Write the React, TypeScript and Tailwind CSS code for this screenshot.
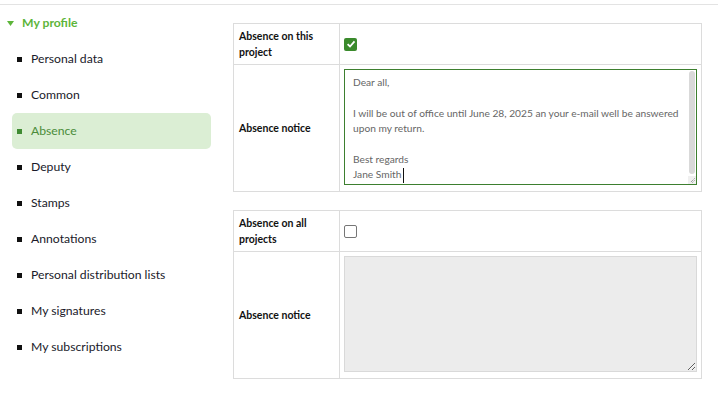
import { ReactNode } from 'react';

const menu = [
  'Personal data',
  'Common',
  'Absence',
  'Deputy',
  'Stamps',
  'Annotations',
  'Personal distribution lists',
  'My signatures',
  'My subscriptions',
];

const notice = `Dear all,

I will be out of office until June 28, 2025 an your e-mail well be answered upon my return.

Best regards
Jane Smith`;

function Checkbox({ checked }: { checked: boolean }) {
  if (!checked) {
    return <span className="block h-[13px] w-[13px] rounded-[2px] border border-[#767676] bg-white" />;
  }
  return (
    <span className="flex h-[13px] w-[13px] items-center justify-center rounded-[2px] bg-[#3a8a2c]">
      <svg width="10" height="10" viewBox="0 0 10 10">
        <path d="M1.6 5.2 L4 7.5 L8.5 2.4" fill="none" stroke="#fff" strokeWidth="1.8" />
      </svg>
    </span>
  );
}

function Row({ label, children, tall }: { label: ReactNode; children: ReactNode; tall?: boolean }) {
  return (
    <div className={`flex ${tall ? 'h-[126px]' : 'h-[41px] border-b border-[#dcdcdc]'}`}>
      <div className="flex w-[106px] shrink-0 items-center border-r border-[#dcdcdc] pl-[5px] text-[10.5px] font-bold leading-[16px] text-[#111]">
        {label}
      </div>
      <div className={`flex flex-1 px-[4px] ${tall ? 'items-start pt-[4px]' : 'items-center'}`}>{children}</div>
    </div>
  );
}

export default function App() {
  return (
    <div className="h-[395px] w-[718px] overflow-hidden bg-white font-['Lato',sans-serif] text-[#1a1a1a]">
      <div className="h-[5px] border-b border-[#e3e3e3]" />
      <div className="flex">
        {/* sidebar */}
        <div className="w-[233px] shrink-0">
          <div className="mt-[6px] flex h-[24px] items-center pl-[7px]">
            <svg width="7" height="5" viewBox="0 0 7 5" className="mr-[8px]">
              <path d="M0 0 H7 L3.5 5 Z" fill="#5db53a" />
            </svg>
            <span className="text-[12.2px] font-bold text-[#5db53a]">My profile</span>
          </div>
          <ul className="mt-[6px] ml-[12px] w-[199px]">
            {menu.map((item) => {
              const active = item === 'Absence';
              return (
                <li
                  key={item}
                  className={`flex h-[36px] items-center rounded-[5px] pl-[5px] text-[12.2px] ${
                    active ? 'bg-[#dbeed4] text-[#4a8c39]' : 'text-[#1a1a2a]'
                  }`}
                >
                  <span className={`mr-[9px] h-[5px] w-[5px] ${active ? 'bg-[#3f8b32]' : 'bg-[#111]'}`} />
                  {item}
                </li>
              );
            })}
          </ul>
        </div>

        {/* content */}
        <div className="mt-[18px] w-[469px]">
          <div className="border border-[#dcdcdc]">
            <Row label={<span>Absence on this<br />project</span>}>
              <Checkbox checked />
            </Row>
            <Row label="Absence notice" tall>
              <div className="relative h-[116px] w-full">
                <textarea
                  readOnly
                  defaultValue={notice}
                  className="block h-[116px] w-full resize-none overflow-hidden border border-[#3d7f2f] pt-[5px] pr-[10px] pl-[8px] text-[10.2px] leading-[15.4px] text-[#666] outline-none"
                />
                {/* scrollbar thumb, resize corner, caret */}
                <span className="absolute top-[2px] right-[2px] h-[103px] w-[6px] rounded-full bg-[#d9d9d9]" />
                <span className="absolute right-[1px] bottom-[1px] flex h-[8px] w-[8px] items-center justify-center bg-[#f0f0f0]">
                  <svg width="6" height="6" viewBox="0 0 6 6">
                    <path d="M5.5 1.5 L1.5 5.5 M5.5 3.5 L3.5 5.5" stroke="#555" strokeWidth="0.8" strokeDasharray="1 1" />
                  </svg>
                </span>
                <span className="absolute top-[99px] left-[59px] h-[15px] w-px bg-[#111]" />
              </div>
            </Row>
          </div>

          <div className="mt-[18px] border border-[#dcdcdc]">
            <Row label={<span>Absence on all<br />projects</span>}>
              <Checkbox checked={false} />
            </Row>
            <Row label="Absence notice" tall>
              <textarea
                disabled
                className="block h-[116px] w-full resize-y border border-[#d9d9d9] bg-[#ececec]"
              />
            </Row>
          </div>
        </div>
      </div>
    </div>
  );
}
